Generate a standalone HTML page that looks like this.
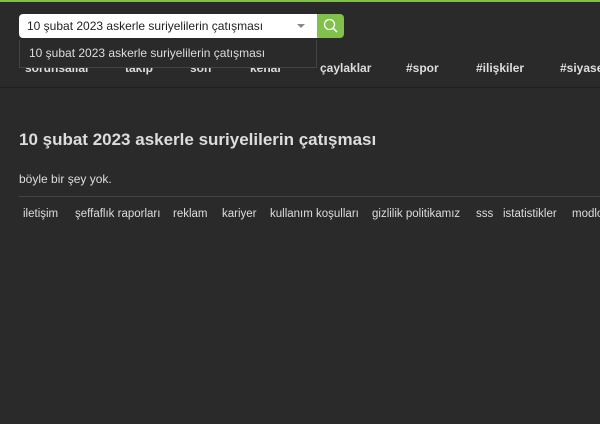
<!DOCTYPE html>
<html><head><meta charset="utf-8"><style>
*{margin:0;padding:0;box-sizing:border-box}
body{width:600px;height:424px;overflow:hidden;background:#2a2a2a;font-family:"Liberation Sans",sans-serif;color:#ddd;position:relative}
.top{position:absolute;left:0;top:0;width:600px;height:2px;background:#81c14b}
.inp{position:absolute;left:19px;top:14px;width:298px;height:24px;background:#fff;border-radius:4px 0 0 4px;color:#222;font-size:12px;line-height:24px;padding-left:8px}
.caret{position:absolute;right:12px;top:10px;border:4px solid transparent;border-top:4px solid #888}
.btn{position:absolute;left:317px;top:14px;width:27px;height:24px;background:#81c14b;border-radius:0 4px 4px 0}
.dd{position:absolute;left:19px;top:40px;width:298px;height:28px;background:#2a2a2a;border:1px solid #444;border-top:none;font-size:12px;color:#ddd;line-height:26px;padding-left:9px;z-index:2}
.nav{position:absolute;top:61px;font-size:12px;font-weight:bold;color:#ddd}
.hr1{position:absolute;left:0;top:87px;width:600px;height:1px;background:#1f1f1f}
h1{position:absolute;left:19px;top:130px;font-size:17px;font-weight:bold;color:#ddd;white-space:nowrap}
.no{position:absolute;left:19px;top:172px;font-size:12px}
.hr2{position:absolute;left:19px;top:196px;width:581px;height:1px;background:#444}
.f{position:absolute;top:208px;font-size:11.5px;white-space:nowrap}
</style></head><body>
<div class="top"></div>
<div class="nav" style="left:25px">sorunsallar</div>
<div class="nav" style="left:125px">takip</div>
<div class="nav" style="left:190px">son</div>
<div class="nav" style="left:250px">kenar</div>
<div class="nav" style="left:320px">çaylaklar</div>
<div class="nav" style="left:406px">#spor</div>
<div class="nav" style="left:476px">#ilişkiler</div>
<div class="nav" style="left:560px">#siyaset</div>
<div class="hr1"></div>
<div class="inp">10 şubat 2023 askerle suriyelilerin çatışması<div class="caret"></div></div>
<div class="btn"><svg width="27" height="24"><circle cx="12.5" cy="10.5" r="5" fill="none" stroke="#fff" stroke-width="1.3"/><line x1="16" y1="14" x2="20" y2="18" stroke="#fff" stroke-width="1.5"/></svg></div>
<div class="dd">10 şubat 2023 askerle suriyelilerin çatışması</div>
<h1>10 şubat 2023 askerle suriyelilerin çatışması</h1>
<div class="no">böyle bir şey yok.</div>
<div class="hr2"></div>
<div class="f" style="left:23px">iletişim</div>
<div class="f" style="left:75px">şeffaflık raporları</div>
<div class="f" style="left:173px">reklam</div>
<div class="f" style="left:222px">kariyer</div>
<div class="f" style="left:270px">kullanım koşulları</div>
<div class="f" style="left:372px">gizlilik politikamız</div>
<div class="f" style="left:476px">sss</div>
<div class="f" style="left:503px">istatistikler</div>
<div class="f" style="left:572px">modlog</div>
</body></html>
